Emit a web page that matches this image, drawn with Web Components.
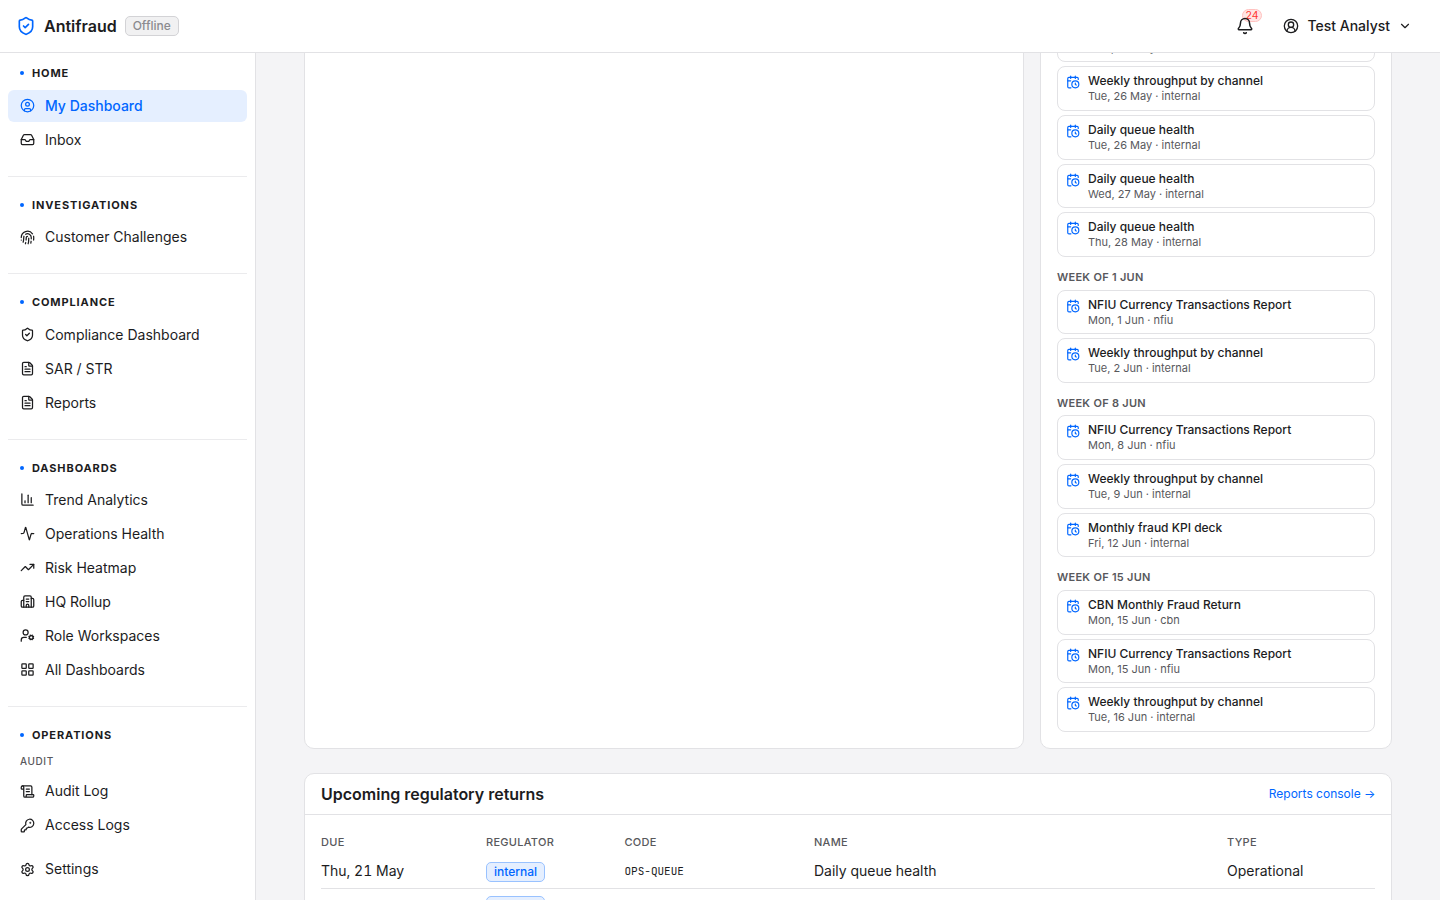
<!DOCTYPE html>
<html lang="en">
<head>
<meta charset="utf-8">
<title>Antifraud</title>
<style>
    :root{
        --accent: #0066ff;
        --accent-soft: #e5efff;
        --accent-line: #99c2ff;
        --text: #1c1c1e;
        --muted: #58585c;
        --line: #e2e2e5;
        --canvas: #f4f4f6;
    }
    body{
        margin: 0;
        height: 100vh;
        overflow: hidden;
        display: flex;
        flex-direction: column;
        background: var(--canvas);
        color: var(--text);
        font: 14px/20px Inter, "Liberation Sans", sans-serif;
    }
    .layout{
        flex: 1;
        min-height: 0;
        display: flex;
    }
</style>
</head>
<body>
<app-header user="Test Analyst" count="24" status="Offline">Antifraud</app-header>
<div class="layout">
    <app-sidebar>
        <nav-section label="Home">
            <nav-item icon="user" active>My Dashboard</nav-item>
            <nav-item icon="inbox">Inbox</nav-item>
        </nav-section>
        <nav-section label="Investigations">
            <nav-item icon="fingerprint">Customer Challenges</nav-item>
        </nav-section>
        <nav-section label="Compliance">
            <nav-item icon="shield">Compliance Dashboard</nav-item>
            <nav-item icon="file">SAR / STR</nav-item>
            <nav-item icon="file">Reports</nav-item>
        </nav-section>
        <nav-section label="Dashboards">
            <nav-item icon="chart">Trend Analytics</nav-item>
            <nav-item icon="activity">Operations Health</nav-item>
            <nav-item icon="trend">Risk Heatmap</nav-item>
            <nav-item icon="building">HQ Rollup</nav-item>
            <nav-item icon="usercog">Role Workspaces</nav-item>
            <nav-item icon="grid">All Dashboards</nav-item>
        </nav-section>
        <nav-section label="Operations" group="Audit">
            <nav-item icon="scroll">Audit Log</nav-item>
            <nav-item icon="key">Access Logs</nav-item>
        </nav-section>
        <nav-item slot="footer" icon="settings">Settings</nav-item>
    </app-sidebar>
    <dashboard-page>
        <panel-card slot="main"></panel-card>
        <panel-card slot="side">
            <returns-calendar></returns-calendar>
        </panel-card>
        <panel-card slot="bottom" heading="Upcoming regulatory returns" link="Reports console →">
            <returns-table></returns-table>
        </panel-card>
    </dashboard-page>
</div>

<script>
// inner markup of each 24x24 icon
const icons = {
    user: `<circle cx="12" cy="12" r="10"/><circle cx="12" cy="10" r="3"/><path d="M7 20.662V19a2 2 0 0 1 2-2h6a2 2 0 0 1 2 2v1.662"/>`,
    userround: `<path d="M18 20a6 6 0 0 0-12 0"/><circle cx="12" cy="10" r="4"/><circle cx="12" cy="12" r="10"/>`,
    inbox: `<path d="M22 12h-6l-2 3h-4l-2-3H2"/><path d="M5.45 5.11 2 12v6a2 2 0 0 0 2 2h16a2 2 0 0 0 2-2v-6l-3.45-6.89A2 2 0 0 0 16.76 4H7.24a2 2 0 0 0-1.79 1.11z"/>`,
    fingerprint: `<path d="M12 10a2 2 0 0 0-2 2c0 1.02-.1 2.51-.26 4"/><path d="M14 13.12c0 2.38 0 6.38-1 8.88"/><path d="M17.29 21.02c.12-.6.43-2.3.5-3.02"/><path d="M2 12a10 10 0 0 1 18-6"/><path d="M2 16h.01"/><path d="M21.8 16c.2-2 .131-5.354 0-6"/><path d="M5 19.5C5.5 18 6 15 6 12a6 6 0 0 1 .34-2"/><path d="M8.65 22c.21-.66.45-1.32.57-2"/><path d="M9 6.8a6 6 0 0 1 9 5.2v2"/>`,
    shield: `<path d="M20 13c0 5-3.5 7.5-7.66 8.95a1 1 0 0 1-.67-.01C7.5 20.5 4 18 4 13V6a1 1 0 0 1 1-1c2 0 4.5-1.2 6.24-2.72a1.17 1.17 0 0 1 1.52 0C14.51 3.81 17 5 19 5a1 1 0 0 1 1 1z"/><path d="m9 12 2 2 4-4"/>`,
    file: `<path d="M6 22a2 2 0 0 1-2-2V4a2 2 0 0 1 2-2h8a2.4 2.4 0 0 1 1.704.706l3.588 3.588A2.4 2.4 0 0 1 20 8v12a2 2 0 0 1-2 2z"/><path d="M14 2v5a1 1 0 0 0 1 1h5"/><path d="M10 9H8"/><path d="M16 13H8"/><path d="M16 17H8"/>`,
    chart: `<path d="M3 3v16a2 2 0 0 0 2 2h16"/><path d="M18 17V9"/><path d="M13 17V5"/><path d="M8 17v-3"/>`,
    activity: `<path d="M22 12h-2.48a2 2 0 0 0-1.93 1.46l-2.35 8.36a.25.25 0 0 1-.48 0L9.24 2.18a.25.25 0 0 0-.48 0l-2.35 8.36A2 2 0 0 1 4.49 12H2"/>`,
    trend: `<path d="M16 7h6v6"/><path d="m22 7-8.5 8.5-5-5L2 17"/>`,
    building: `<path d="M10 12h4"/><path d="M10 8h4"/><path d="M14 21v-3a2 2 0 0 0-4 0v3"/><path d="M6 10H4a2 2 0 0 0-2 2v7a2 2 0 0 0 2 2h16a2 2 0 0 0 2-2V9a2 2 0 0 0-2-2h-2"/><path d="M6 21V5a2 2 0 0 1 2-2h8a2 2 0 0 1 2 2v16"/>`,
    usercog: `<path d="M10 15H6a4 4 0 0 0-4 4v2"/><path d="m14.305 16.53.923-.382"/><path d="m15.228 13.852-.923-.383"/><path d="m16.852 12.228-.383-.923"/><path d="m16.852 17.772-.383.924"/><path d="m19.148 12.228.383-.923"/><path d="m19.53 18.696-.382-.924"/><path d="m20.772 13.852.924-.383"/><path d="m20.772 16.148.924.383"/><circle cx="18" cy="15" r="3"/><circle cx="9" cy="7" r="4"/>`,
    grid: `<rect width="7" height="7" x="3" y="3" rx="1"/><rect width="7" height="7" x="14" y="3" rx="1"/><rect width="7" height="7" x="14" y="14" rx="1"/><rect width="7" height="7" x="3" y="14" rx="1"/>`,
    scroll: `<path d="M15 12h-5"/><path d="M15 8h-5"/><path d="M19 17V5a2 2 0 0 0-2-2H4"/><path d="M8 21h12a2 2 0 0 0 2-2v-1a1 1 0 0 0-1-1H11a1 1 0 0 0-1 1v1a2 2 0 1 1-4 0V5a2 2 0 1 0-4 0v2a1 1 0 0 0 1 1h3"/>`,
    key: `<path d="M2.586 17.414A2 2 0 0 0 2 18.828V21a1 1 0 0 0 1 1h3a1 1 0 0 0 1-1v-1a1 1 0 0 1 1-1h1a1 1 0 0 0 1-1v-1a1 1 0 0 1 1-1h.172a2 2 0 0 0 1.414-.586l.814-.814a6.5 6.5 0 1 0-4-4z"/><circle cx="16.5" cy="7.5" r=".5" fill="currentColor"/>`,
    settings: `<path d="M9.671 4.136a2.34 2.34 0 0 1 4.659 0 2.34 2.34 0 0 0 3.319 1.915 2.34 2.34 0 0 1 2.33 4.033 2.34 2.34 0 0 0 0 3.831 2.34 2.34 0 0 1-2.33 4.033 2.34 2.34 0 0 0-3.319 1.915 2.34 2.34 0 0 1-4.659 0 2.34 2.34 0 0 0-3.32-1.915 2.34 2.34 0 0 1-2.33-4.033 2.34 2.34 0 0 0 0-3.831A2.34 2.34 0 0 1 6.35 6.051a2.34 2.34 0 0 0 3.319-1.915"/><circle cx="12" cy="12" r="3"/>`,
    bell: `<path d="M10.268 21a2 2 0 0 0 3.464 0"/><path d="M3.262 15.326A1 1 0 0 0 4 17h16a1 1 0 0 0 .74-1.673C19.41 13.956 18 12.499 18 8A6 6 0 0 0 6 8c0 4.499-1.411 5.956-2.738 7.326"/>`,
    chevron: `<path d="m6 9 6 6 6-6"/>`,
    calendar: `<path d="M16 14v2.2l1.6 1"/><path d="M16 2v4"/><path d="M21 7.5V6a2 2 0 0 0-2-2H5a2 2 0 0 0-2 2v14a2 2 0 0 0 2 2h3.5"/><path d="M3 10h5"/><path d="M8 2v4"/><circle cx="16" cy="16" r="6"/>`
};

// <ui-icon name="bell" size="18">
class UiIcon extends HTMLElement {
    constructor() {
        super();
        this.attachShadow({ mode: "open" });
    }

    connectedCallback() {
        const size = this.getAttribute("size") || 15;
        this.shadowRoot.innerHTML = `
<style>
    :host{ display: block; flex: none; }
    svg{ display: block; }
</style>
<svg width="${size}" height="${size}" viewBox="0 0 24 24" fill="none" stroke="currentColor" stroke-width="2" stroke-linecap="round" stroke-linejoin="round">${icons[this.getAttribute("name")]}</svg>
`;
    }
}
customElements.define("ui-icon", UiIcon);

class AppHeader extends HTMLElement {
    constructor() {
        super();
        this.attachShadow({ mode: "open" });
    }

    connectedCallback() {
        this.shadowRoot.innerHTML = `
<style>
    :host{
        flex: none;
        box-sizing: border-box;
        height: 53px;
        padding: 0 28px 0 16px;
        display: flex;
        align-items: center;
        background: #fff;
        border-bottom: 1px solid var(--line);
        position: relative;
        z-index: 1;
    }
    .logo{ color: var(--accent); margin-right: 8px; }
    .name{ font-size: 16px; font-weight: 600; }
    .status{
        margin-left: 8px;
        padding: 0 7px;
        border: 1px solid #d3d3d6;
        border-radius: 5px;
        background: #f1f1f2;
        color: #8b8b8f;
        font-size: 12px;
        font-weight: 500;
        line-height: 18px;
    }
    .bell{ position: relative; margin-left: auto; }
    .bell ui-icon{ position: relative; z-index: 1; }
    .count{
        position: absolute;
        left: 6px;
        top: -8px;
        box-sizing: border-box;
        width: 20px;
        border: 1px solid #ffc2c0;
        border-radius: 7px;
        background: #ffe5e4;
        color: #ff3530;
        font-size: 10.5px;
        line-height: 11px;
        text-align: center;
    }
    .user{
        margin-left: 29.5px;
        display: flex;
        align-items: center;
        gap: 8px;
        font-weight: 500;
    }
</style>
<ui-icon class="logo" name="shield" size="20"></ui-icon>
<span class="name"><slot></slot></span>
<span class="status">${this.getAttribute("status")}</span>
<div class="bell">
    <ui-icon name="bell" size="18"></ui-icon>
    <span class="count">${this.getAttribute("count")}</span>
</div>
<div class="user">
    <ui-icon name="userround" size="16"></ui-icon>
    <span>${this.getAttribute("user")}</span>
    <ui-icon name="chevron" size="14"></ui-icon>
</div>
`;
    }
}
customElements.define("app-header", AppHeader);

const sidebarTemplate = document.createElement("template");
sidebarTemplate.innerHTML = `
<style>
    :host{
        flex: none;
        box-sizing: border-box;
        width: 256px;
        padding: 0 8px;
        display: flex;
        flex-direction: column;
        background: #fff;
        border-right: 1px solid var(--line);
    }
    nav{
        flex: 1;
        min-height: 0;
        padding-top: 12.3px;
        overflow: hidden;
    }
    footer{ padding: 8px 0 15px; }
</style>
<nav><slot></slot></nav>
<footer><slot name="footer"></slot></footer>
`;

class AppSidebar extends HTMLElement {
    constructor() {
        super();
        this.attachShadow({ mode: "open" });
        this.shadowRoot.appendChild(sidebarTemplate.content.cloneNode(true));
    }
}
customElements.define("app-sidebar", AppSidebar);

class NavSection extends HTMLElement {
    constructor() {
        super();
        this.attachShadow({ mode: "open" });
    }

    connectedCallback() {
        const group = this.getAttribute("group");
        this.shadowRoot.innerHTML = `
<style>
    :host{ display: block; padding-bottom: 20px; }
    :host(:not(:first-child)){
        border-top: 1px solid #ebebed;
        padding-top: 20px;
    }
    .label{
        display: flex;
        align-items: center;
        gap: 8px;
        padding: 0 12px;
        margin-bottom: 8px;
        font-size: 11px;
        font-weight: 700;
        line-height: 16.4px;
        letter-spacing: 0.08em;
        text-transform: uppercase;
    }
    .label::before{
        content: "";
        width: 4px;
        height: 4px;
        margin-bottom: 0.3px;
        border-radius: 50%;
        background: var(--accent);
    }
    .group{
        padding: 0 12px;
        margin: 10px 0 6px;
        color: var(--muted);
        font-size: 10px;
        font-weight: 500;
        line-height: 16px;
        letter-spacing: 0.06em;
        text-transform: uppercase;
    }
    .items{ display: flex; flex-direction: column; gap: 2px; }
</style>
<div class="label">${this.getAttribute("label")}</div>
${group ? `<div class="group">${group}</div>` : ""}
<div class="items"><slot></slot></div>
`;
    }
}
customElements.define("nav-section", NavSection);

class NavItem extends HTMLElement {
    constructor() {
        super();
        this.attachShadow({ mode: "open" });
    }

    connectedCallback() {
        this.shadowRoot.innerHTML = `
<style>
    :host{
        display: flex;
        align-items: center;
        gap: 10px;
        height: 32px;
        padding: 0 12px;
        border-radius: 6px;
    }
    :host([active]){
        background: var(--accent-soft);
        color: var(--accent);
        font-weight: 500;
    }
</style>
<ui-icon name="${this.getAttribute("icon")}"></ui-icon>
<span><slot></slot></span>
`;
    }
}
customElements.define("nav-item", NavItem);

const pageTemplate = document.createElement("template");
pageTemplate.innerHTML = `
<style>
    :host{
        flex: 1;
        min-width: 0;
        padding: 0 48px;
        overflow: hidden;
    }
    /* the page is scrolled, so the first row starts above the header's edge */
    .top{
        display: grid;
        grid-template: 780px / 720px 352px;
        gap: 16px;
        margin: -84.05px 0 24.05px;
    }
</style>
<div class="top">
    <slot name="main"></slot>
    <slot name="side"></slot>
</div>
<slot name="bottom"></slot>
`;

class DashboardPage extends HTMLElement {
    constructor() {
        super();
        this.attachShadow({ mode: "open" });
        this.shadowRoot.appendChild(pageTemplate.content.cloneNode(true));
    }
}
customElements.define("dashboard-page", DashboardPage);

class PanelCard extends HTMLElement {
    constructor() {
        super();
        this.attachShadow({ mode: "open" });
    }

    connectedCallback() {
        const heading = this.getAttribute("heading");
        this.shadowRoot.innerHTML = `
<style>
    :host{
        display: flex;
        flex-direction: column;
        box-sizing: border-box;
        background: #fff;
        border: 1px solid var(--line);
        border-radius: 10px;
    }
    header{
        display: flex;
        align-items: center;
        justify-content: space-between;
        height: 40px;
        padding: 0 15.5px 0 16px;
        border-bottom: 1px solid var(--line);
    }
    h2{ margin: 0; font-size: 16px; font-weight: 600; }
    a{ color: var(--accent); font-size: 12px; }
    .body{
        flex: 1;
        min-height: 0;
        padding: 16px;
        display: flex;
        flex-direction: column;
        justify-content: flex-end;
    }
</style>
${heading ? `<header><h2>${heading}</h2><a>${this.getAttribute("link")}</a></header>` : ""}
<div class="body"><slot></slot></div>
`;
    }
}
customElements.define("panel-card", PanelCard);

const weeks = [
    { label: "", items: [
        ["NFIU Currency Transactions Report", "Mon, 25 May · nfiu"],
        ["Weekly throughput by channel", "Tue, 26 May · internal"],
        ["Daily queue health", "Tue, 26 May · internal"],
        ["Daily queue health", "Wed, 27 May · internal"],
        ["Daily queue health", "Thu, 28 May · internal"]
    ] },
    { label: "Week of 1 Jun", items: [
        ["NFIU Currency Transactions Report", "Mon, 1 Jun · nfiu"],
        ["Weekly throughput by channel", "Tue, 2 Jun · internal"]
    ] },
    { label: "Week of 8 Jun", items: [
        ["NFIU Currency Transactions Report", "Mon, 8 Jun · nfiu"],
        ["Weekly throughput by channel", "Tue, 9 Jun · internal"],
        ["Monthly fraud KPI deck", "Fri, 12 Jun · internal"]
    ] },
    { label: "Week of 15 Jun", items: [
        ["CBN Monthly Fraud Return", "Mon, 15 Jun · cbn"],
        ["NFIU Currency Transactions Report", "Mon, 15 Jun · nfiu"],
        ["Weekly throughput by channel", "Tue, 16 Jun · internal"]
    ] }
];

class ReturnsCalendar extends HTMLElement {
    constructor() {
        super();
        this.attachShadow({ mode: "open" });
    }

    connectedCallback() {
        this.render();
    }

    render() {
        this.shadowRoot.innerHTML = `
<style>
    :host{ display: flex; flex-direction: column; gap: 12px; }
    section{ display: flex; flex-direction: column; gap: 4px; }
    h3{
        margin: 0;
        color: var(--muted);
        font-size: 11px;
        font-weight: 600;
        line-height: 16.4px;
        letter-spacing: 0.025em;
        text-transform: uppercase;
    }
    .item{
        display: flex;
        gap: 8px;
        padding: 6px 8px;
        border: 1px solid var(--line);
        border-radius: 8px;
    }
    .item ui-icon{ color: var(--accent); margin-top: 2px; }
    .title{ font-size: 12px; font-weight: 500; line-height: 15px; }
    .date{ margin-top: 2px; color: var(--muted); font-size: 11px; line-height: 13.7px; }
</style>
${weeks.map(week => `
<section>
    ${week.label ? `<h3>${week.label}</h3>` : ""}
    ${week.items.map(([title, date]) => `
    <div class="item">
        <ui-icon name="calendar" size="14"></ui-icon>
        <div>
            <div class="title">${title}</div>
            <div class="date">${date}</div>
        </div>
    </div>`).join("")}
</section>`).join("")}
`;
    }
}
customElements.define("returns-calendar", ReturnsCalendar);

const returns = [
    ["Thu, 21 May", "internal", "OPS-QUEUE", "Daily queue health", "Operational"],
    ["Fri, 22 May", "internal", "OPS-QUEUE", "Daily queue health", "Operational"]
];

class ReturnsTable extends HTMLElement {
    constructor() {
        super();
        this.attachShadow({ mode: "open" });
    }

    connectedCallback() {
        this.render();
    }

    render() {
        this.shadowRoot.innerHTML = `
<style>
    :host{ display: block; }
    .row{
        display: grid;
        grid-template-columns: 165px 138.5px 189.5px 413px 1fr;
        align-items: center;
        height: 33.4px;
        border-bottom: 1px solid var(--line);
        font-variant-numeric: tabular-nums;
    }
    .row > span{ padding-bottom: 1.1px; }
    .row > .tag{ padding-bottom: 0; }
    .row.head{
        height: 24px;
        border: 0;
        color: var(--muted);
        font-size: 11px;
        font-weight: 500;
        letter-spacing: 0.025em;
        text-transform: uppercase;
    }
    .head > span{ padding-bottom: 2px; }
    .badge{
        display: inline-block;
        padding: 0 7px;
        border: 1px solid var(--accent-line);
        border-radius: 5px;
        background: var(--accent-soft);
        color: var(--accent);
        font-size: 12px;
        font-weight: 500;
        line-height: 18px;
        vertical-align: top;
    }
    code{
        padding-bottom: 2px;
        font: 11px "JetBrains Mono", "Roboto Mono", "Liberation Mono", monospace;
    }
</style>
<div class="row head"><span>Due</span><span>Regulator</span><span>Code</span><span>Name</span><span>Type</span></div>
${returns.map(([due, regulator, code, name, type]) => `
<div class="row">
    <span>${due}</span>
    <span class="tag"><span class="badge">${regulator}</span></span>
    <code>${code}</code>
    <span>${name}</span>
    <span>${type}</span>
</div>`).join("")}
`;
    }
}
customElements.define("returns-table", ReturnsTable);
</script>
</body>
</html>
